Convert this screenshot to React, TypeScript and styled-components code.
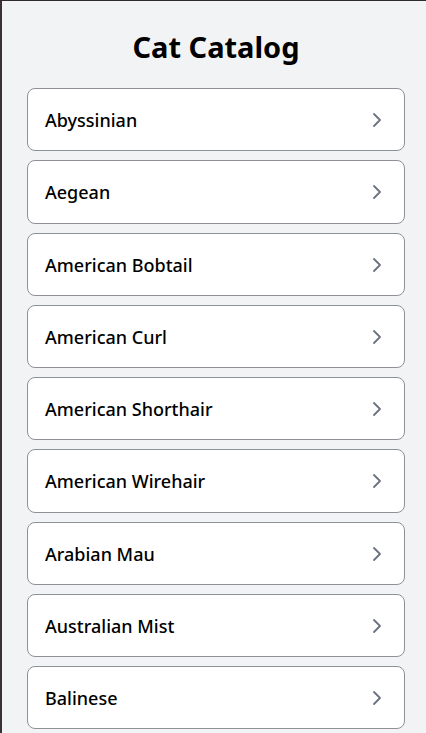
import React from "react";
import styled, { createGlobalStyle } from "styled-components";

const Global = createGlobalStyle`
  html, body { margin: 0; padding: 0; }
  body {
    background: #f2f3f5;
    font-family: "Noto Sans", "Open Sans", sans-serif;
    color: #111;
    border-top: 1px solid #2f2a2a;
    border-left: 2px solid #3a3232;
    height: 733px;
    overflow: hidden;
    box-sizing: border-box;
  }
`;

const Page = styled.main`
  display: flex;
  flex-direction: column;
  padding: 0 21px 0 25px;
`;

const Title = styled.h1`
  margin: 0;
  padding: 26px 0 21px;
  text-align: center;
  font-size: 29px;
  font-weight: 700;
  line-height: 40px;
  color: #000;
`;

const List = styled.ul`
  list-style: none;
  margin: 0;
  padding: 0;
  display: flex;
  flex-direction: column;
  gap: 9px;
`;

const Card = styled.li`
  display: flex;
  align-items: center;
  justify-content: space-between;
  height: 63.25px;
  box-sizing: border-box;
  padding: 1px 15px 0 17px;
  background: #fff;
  border: 1px solid #8e9196;
  border-radius: 8px;
`;

const Name = styled.span`
  font-size: 18px;
  font-weight: 500;
  color: #000;
`;

const Chevron = () => (
  <svg width="24" height="24" viewBox="0 0 24 24" fill="none" stroke="#6b7280" strokeWidth="1.8" strokeLinecap="round" strokeLinejoin="round">
    <path d="m9 18 6-6-6-6" />
  </svg>
);

const breeds = [
  "Abyssinian",
  "Aegean",
  "American Bobtail",
  "American Curl",
  "American Shorthair",
  "American Wirehair",
  "Arabian Mau",
  "Australian Mist",
  "Balinese",
];

export default function App() {
  return (
    <>
      <Global />
      <Page>
        <Title>Cat Catalog</Title>
        <List>
          {breeds.map((b) => (
            <Card key={b}>
              <Name>{b}</Name>
              <Chevron />
            </Card>
          ))}
        </List>
      </Page>
    </>
  );
}
